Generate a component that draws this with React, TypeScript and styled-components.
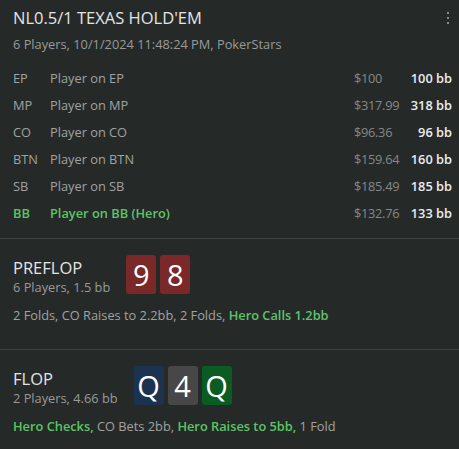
import React from "react";
import styled, { createGlobalStyle } from "styled-components";

interface Seat {
	pos: string,
	name: string,
	stack: string,
	bb: string,
	hero?: boolean,
}

interface Action {
	text: string,
	hero?: boolean,
}

interface CardProps {
	rank: string,
	suit: "h" | "s" | "d" | "c",
}

const seats: Seat[] = [
	{ pos: "EP", name: "Player on EP", stack: "$100", bb: "100 bb" },
	{ pos: "MP", name: "Player on MP", stack: "$317.99", bb: "318 bb" },
	{ pos: "CO", name: "Player on CO", stack: "$96.36", bb: "96 bb" },
	{ pos: "BTN", name: "Player on BTN", stack: "$159.64", bb: "160 bb" },
	{ pos: "SB", name: "Player on SB", stack: "$185.49", bb: "185 bb" },
	{ pos: "BB", name: "Player on BB (Hero)", stack: "$132.76", bb: "133 bb", hero: true },
];

const streets: { name: string, info: string, cards: CardProps[], actions: Action[] }[] = [
	{
		name: "PREFLOP",
		info: "6 Players, 1.5 bb",
		cards: [{ rank: "9", suit: "h" }, { rank: "8", suit: "h" }],
		actions: [
			{ text: "2 Folds, CO Raises to 2.2bb, 2 Folds, " },
			{ text: "Hero Calls 1.2bb", hero: true },
		],
	},
	{
		name: "FLOP",
		info: "2 Players, 4.66 bb",
		cards: [{ rank: "Q", suit: "d" }, { rank: "4", suit: "s" }, { rank: "Q", suit: "c" }],
		actions: [
			{ text: "Hero Checks,", hero: true },
			{ text: " CO Bets 2bb, " },
			{ text: "Hero Raises to 5bb,", hero: true },
			{ text: " 1 Fold" },
		],
	},
];

const suitColors = {
	h: "#7a2828",
	d: "#1c3350",
	s: "#474747",
	c: "#0a5c22",
};

const GlobalStyle = createGlobalStyle`
	html, body {
		margin: 0;
		padding: 0;
		background: #252a29;
	}
	body {
		font-family: "Open Sans", "Noto Sans", sans-serif;
	}
`;

const Panel = styled.div`
	width: 459px;
	height: 449px;
	background: #252a29;
	color: #a3a5a4;
	overflow: hidden;
`;

const Header = styled.div`
	padding: 7px 7px 0 13px;
	height: 231px;
`;

const TitleRow = styled.div`
	display: flex;
	justify-content: space-between;
	align-items: flex-start;
`;

const Title = styled.div`
	font-size: 16.5px;
	color: #e4e4e4;
	line-height: 22px;
`;

const Kebab = styled.div`
	display: flex;
	flex-direction: column;
	gap: 3px;
	padding: 5px 3px 0 0;

	span {
		width: 2px;
		height: 2px;
		background: #8a8c8b;
	}
`;

const Meta = styled.div`
	font-size: 12.8px;
	margin-top: 6px;
	color: #989a99;
`;

const SeatTable = styled.div`
	display: grid;
	grid-template-columns: 37px 1fr 51px 47px;
	grid-auto-rows: 27px;
	align-items: center;
	margin-top: 11px;
`;

const Cell = styled.div<{ $hero?: boolean, $bright?: boolean, $right?: boolean }>`
	font-size: 12.8px;
	color: ${p => p.$hero ? "#5cc466" : p.$bright ? "#ececec" : "#a0a2a1"};
	font-weight: ${p => p.$hero || p.$bright ? 600 : 400};
	text-align: ${p => p.$right ? "right" : "left"};
	white-space: nowrap;
`;

const Stack = styled(Cell)`
	color: #858786;
	font-weight: 400;
	letter-spacing: -0.3px;
`;

const Street = styled.section`
	border-top: 1px solid #3c4140;
	padding: 16px 13px 0 13px;
	height: 111px;
	box-sizing: border-box;
`;

const StreetTop = styled.div`
	display: flex;
	align-items: flex-start;
	gap: 16px;
`;

const StreetLabel = styled.div`
	display: flex;
	flex-direction: column;
	padding-top: 2px;
`;

const StreetName = styled.div`
	font-size: 16.5px;
	color: #e4e4e4;
	line-height: 22px;
`;

const StreetInfo = styled.div`
	font-size: 12.8px;
	color: #989a99;
	line-height: 16px;
`;

const Cards = styled.div`
	display: flex;
	gap: 4px;
`;

const Card = styled.div<{ $suit: CardProps["suit"] }>`
	width: 30px;
	height: 39px;
	border-radius: 3px;
	background: ${p => suitColors[p.$suit]};
	color: #ffffff;
	font-size: 29px;
	display: flex;
	align-items: center;
	justify-content: center;
`;

const Actions = styled.div`
	font-size: 12.8px;
	margin-top: 11px;
	color: #a0a2a1;
	white-space: nowrap;
`;

const ActionPart = styled.span<{ $hero?: boolean }>`
	color: ${p => p.$hero ? "#5cc466" : "#a0a2a1"};
	font-weight: ${p => p.$hero ? 600 : 400};
`;

export default function App() {
	return (
		<>
			<GlobalStyle />
			<Panel>
				<Header>
					<TitleRow>
						<Title>NL0.5/1 TEXAS HOLD'EM</Title>
						<Kebab><span /><span /><span /></Kebab>
					</TitleRow>
					<Meta>6 Players, 10/1/2024 11:48:24 PM, PokerStars</Meta>
					<SeatTable>
						{seats.map(s => (
							<React.Fragment key={s.pos}>
								<Cell $hero={s.hero}>{s.pos}</Cell>
								<Cell $hero={s.hero}>{s.name}</Cell>
								<Stack>{s.stack}</Stack>
								<Cell $bright $right>{s.bb}</Cell>
							</React.Fragment>
						))}
					</SeatTable>
				</Header>
				{streets.map(st => (
					<Street key={st.name}>
						<StreetTop>
							<StreetLabel>
								<StreetName>{st.name}</StreetName>
								<StreetInfo>{st.info}</StreetInfo>
							</StreetLabel>
							<Cards>
								{st.cards.map((c, j) => (
									<Card key={j} $suit={c.suit}>{c.rank}</Card>
								))}
							</Cards>
						</StreetTop>
						<Actions>
							{st.actions.map((a, j) => (
								<ActionPart key={j} $hero={a.hero}>{a.text}</ActionPart>
							))}
						</Actions>
					</Street>
				))}
			</Panel>
		</>
	);
}
